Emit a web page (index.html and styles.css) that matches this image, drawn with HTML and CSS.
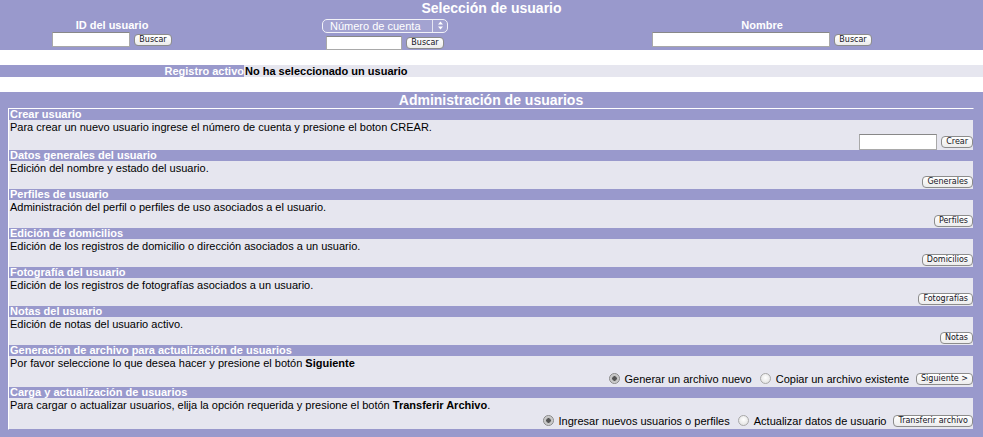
FILE: index.html
```html
<!DOCTYPE html>
<html lang="es">
<head>
<meta charset="utf-8">
<title>Administración de usuarios</title>
<link rel="stylesheet" href="styles.css">
</head>
<body>
<div class="seleccion">
  <h1 class="panel-title">Selección de usuario</h1>
  <div class="search-grid">
    <div class="search-col">
      <div class="search-label">ID del usuario</div>
      <div class="field-row"><input class="txt w-id" type="text"><button class="btn">Buscar</button></div>
    </div>
    <div class="search-col col-cuenta">
      <div class="select-box">
        <span class="select-text">Número de cuenta</span>
        <span class="select-arrows">
          <svg width="7" height="9" viewBox="0 0 7 9"><path d="M3.5 0.5 L6 3.5 H1 Z M3.5 8.5 L6 5.5 H1 Z" fill="#fff"/></svg>
        </span>
      </div>
      <div class="field-row"><input class="txt w-cuenta" type="text"><button class="btn">Buscar</button></div>
    </div>
    <div class="search-col">
      <div class="search-label">Nombre</div>
      <div class="field-row"><input class="txt w-nombre" type="text"><button class="btn">Buscar</button></div>
    </div>
  </div>
</div>

<div class="registro">
  <div class="reg-label">Registro activo</div>
  <div class="reg-value">No ha seleccionado un usuario</div>
</div>

<div class="admin">
  <h2 class="admin-title">Administración de usuarios</h2>
  <div class="admin-table">
    <section class="block">
      <div class="block-head">Crear usuario</div>
      <div class="block-desc">Para crear un nuevo usuario ingrese el número de cuenta y presione el boton CREAR.</div>
      <div class="actions input-row"><input class="txt w-crear" type="text"><button class="btn">Crear</button></div>
    </section>
    <section class="block">
      <div class="block-head">Datos generales del usuario</div>
      <div class="block-desc">Edición del nombre y estado del usuario.</div>
      <div class="actions"><button class="btn">Generales</button></div>
    </section>
    <section class="block">
      <div class="block-head">Perfiles de usuario</div>
      <div class="block-desc">Administración del perfil o perfiles de uso asociados a el usuario.</div>
      <div class="actions"><button class="btn">Perfiles</button></div>
    </section>
    <section class="block">
      <div class="block-head">Edición de domicilios</div>
      <div class="block-desc">Edición de los registros de domicilio o dirección asociados a un usuario.</div>
      <div class="actions"><button class="btn">Domicilios</button></div>
    </section>
    <section class="block">
      <div class="block-head">Fotografía del usuario</div>
      <div class="block-desc">Edición de los registros de fotografías asociados a un usuario.</div>
      <div class="actions"><button class="btn">Fotografías</button></div>
    </section>
    <section class="block">
      <div class="block-head">Notas del usuario</div>
      <div class="block-desc">Edición de notas del usuario activo.</div>
      <div class="actions"><button class="btn">Notas</button></div>
    </section>
    <section class="block">
      <div class="block-head">Generación de archivo para actualización de usuarios</div>
      <div class="block-desc">Por favor seleccione lo que desea hacer y presione el botón <b>Siguiente</b></div>
      <div class="actions radio-row">
        <label class="opt"><input type="radio" name="gen" checked>Generar un archivo nuevo</label>
        <label class="opt"><input type="radio" name="gen">Copiar un archivo existente</label>
        <button class="btn">Siguiente &gt;</button>
      </div>
    </section>
    <section class="block">
      <div class="block-head">Carga y actualización de usuarios</div>
      <div class="block-desc">Para cargar o actualizar usuarios, elija la opción requerida y presione el botón <b>Transferir Archivo</b>.</div>
      <div class="actions radio-row">
        <label class="opt"><input type="radio" name="carga" checked>Ingresar nuevos usuarios o perfiles</label>
        <label class="opt"><input type="radio" name="carga">Actualizar datos de usuario</label>
        <button class="btn">Transferir archivo</button>
      </div>
    </section>
  </div>
</div>
</body>
</html>
```
FILE: styles.css
```css
* { box-sizing: border-box; }

body {
  margin: 0;
  font-family: "Liberation Sans", Arial, Helvetica, sans-serif;
  font-size: 11px;
  color: #000;
  background: #fff;
}

/* ---------- Selección de usuario ---------- */
.seleccion {
  background: #9999cc;
  height: 50px;
  overflow: hidden;
}

.panel-title {
  margin: 0;
  font-size: 14px;
  line-height: 16px;
  font-weight: bold;
  color: #fff;
  text-align: center;
}

.search-grid {
  display: grid;
  grid-template-columns: 224px 322px 432px;
  height: 34px;
  align-items: center;
}

.search-col {
  display: flex;
  flex-direction: column;
  align-items: center;
}

.col-cuenta { gap: 3px; padding-top: 2px; }

.search-label {
  font-weight: bold;
  color: #fff;
  line-height: 13px;
}

.field-row {
  display: flex;
  align-items: center;
  gap: 4px;
}

.select-box {
  display: flex;
  width: 126px;
  height: 14px;
  border: 1px solid #f2f2f8;
  border-radius: 5px;
  background: rgba(255, 255, 255, 0.1);
  color: #fff;
  line-height: 12px;
}

.select-text {
  flex: 1;
  padding-left: 7px;
}

.select-arrows {
  width: 15px;
  border-left: 1px solid #e6e6f2;
  display: flex;
  align-items: center;
  justify-content: center;
}

/* ---------- inputs & buttons ---------- */
.txt {
  height: 15px;
  margin: 0;
  padding: 0 2px;
  border: 1px solid #a9a9a9;
  border-top-color: #888;
  background: #fff;
  font-size: 11px;
}

.w-id { width: 78px; }
.w-cuenta { width: 76px; height: 14px; }
.w-nombre { width: 178px; }
.w-crear { width: 78px; height: 16px; }

.btn {
  height: 12px;
  margin: 0;
  padding: 0 4px;
  border: 1px solid #8c8c8c;
  border-radius: 4px;
  background: linear-gradient(#ffffff, #ececec);
  font-family: "DejaVu Sans", "Lucida Grande", sans-serif;
  font-size: 8px;
  line-height: 10px;
  color: #141424;
}

/* ---------- Registro activo ---------- */
.registro {
  display: grid;
  grid-template-columns: 244px 1fr;
  margin-top: 15px;
  height: 12px;
  line-height: 12px;
  font-weight: bold;
}

.reg-label {
  background: #9999cc;
  color: #fff;
  text-align: right;
}

.reg-value {
  background: #e6e6ef;
  padding-left: 1px;
}

/* ---------- Administración ---------- */
.admin {
  margin-top: 15px;
  background: #9999cc;
  padding: 0 9px 9px 8px;
}

.admin-title {
  margin: 0;
  height: 16px;
  font-size: 14px;
  line-height: 16px;
  font-weight: bold;
  color: #fff;
  text-align: center;
}

.admin-table {
  border: 1px solid;
  border-color: #fff #9999cc #9999cc #fff;
  background: #e6e6ef;
}

.block-head {
  height: 11px;
  line-height: 11px;
  padding-left: 1px;
  background: #9999cc;
  color: #fff;
  font-weight: bold;
}

.block-desc {
  padding: 1px 0 0 1px;
  line-height: 13px;
}

.actions {
  display: flex;
  justify-content: flex-end;
  align-items: center;
  gap: 4px;
  height: 14px;
  padding-right: 0;
}

.actions.input-row { height: 16px; }
.actions.radio-row { height: 17px; gap: 0; }

.opt {
  display: flex;
  align-items: center;
  margin-right: 8px;
}

.opt input {
  appearance: none;
  -webkit-appearance: none;
  width: 11px;
  height: 11px;
  margin: 0 5px 0 0;
  border: 1px solid #a8a8a8;
  border-radius: 50%;
  background: radial-gradient(circle at 50% 40%, #ffffff, #dcdcdc);
}

.opt input:checked {
  background: radial-gradient(circle, #555 0 2px, #bdbdbd 2.5px, #e8e8e8 100%);
  border-color: #888;
}

.radio-row .btn { margin-left: -1px; }
```
